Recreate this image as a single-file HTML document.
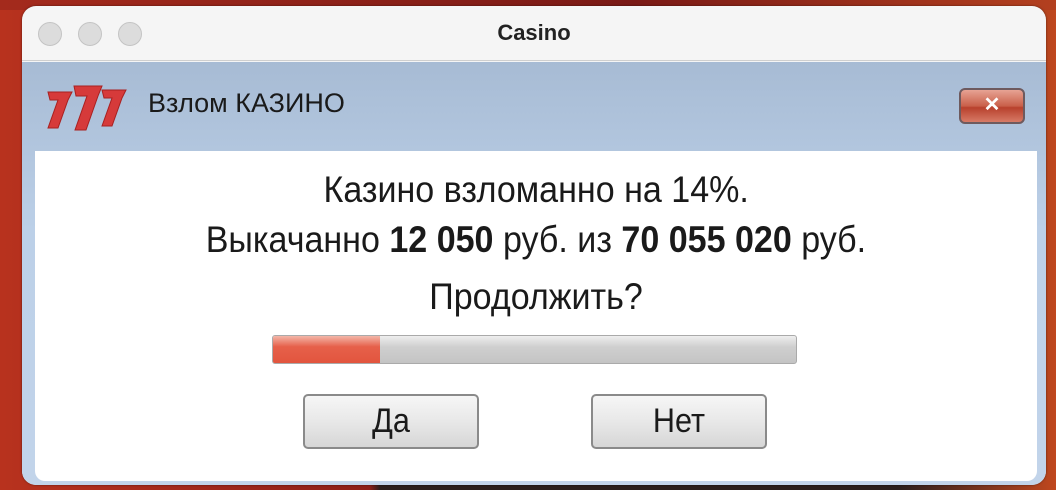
<!DOCTYPE html>
<html><head><meta charset="utf-8"><style>
*{margin:0;padding:0;box-sizing:border-box}
body{width:1056px;height:490px;overflow:hidden;position:relative;background:linear-gradient(90deg,#b8321e 0%,#8e1f18 35%,#2a1e1c 36%,#2a1e1c 85%,#c0471e 100%);font-family:"Liberation Sans",sans-serif}
.bgtop{position:absolute;left:0;top:0;width:1056px;height:10px;background:linear-gradient(90deg,#a42a1c,#7a1a16 60%,#b3401f)}
.win{position:absolute;left:22px;top:6px;width:1024px;height:479px;border-radius:14px;background:#f5f5f5;overflow:hidden;box-shadow:0 0 2px rgba(0,0,0,.5)}
.tb{height:55px;border-bottom:1px solid #cfcfcf;position:relative}
.dot{position:absolute;top:16px;width:24px;height:24px;border-radius:50%;background:#dcdcdc;border:1px solid #c4c4c4}
.title{position:absolute;top:14px;width:100%;text-align:center;font-weight:bold;font-size:22px;color:#222}
.hdr{position:absolute;top:56px;left:0;width:1024px;height:423px;background:linear-gradient(#a7bbd4,#bcd0e8 40%,#c2d4ea)}
.hdr .t{position:absolute;left:126px;top:26px;font-size:27px;color:#1a1a1a}
.x{position:absolute;left:937px;top:26px;width:66px;height:36px;border-radius:6px;border:2px solid #6e5a5e;background:linear-gradient(#e7a394,#c9604a 50%,#b8402c 55%,#d77a66);color:#fff;font-weight:bold;font-size:20px;text-align:center;line-height:31px}
.content{position:absolute;left:13px;top:89px;width:1002px;height:330px;background:#fff;border-radius:0 0 10px 10px}
.ln{position:absolute;left:0;width:1002px;text-align:center;font-size:37px;color:#1a1a1a}
.ln span.s{display:inline-block;transform:scaleX(.92)}
.bar{position:absolute;left:237px;top:184px;width:525px;height:29px;border:1px solid #aaa;border-radius:3px;background:linear-gradient(#eee,#cfcfcf 40%,#c4c4c4);overflow:hidden}
.fill{position:absolute;left:0;top:0;width:107px;height:100%;background:linear-gradient(#f3b6a8,#e6604a 40%,#e2553e)}
.btn{position:absolute;top:243px;width:176px;height:55px;border:2px solid #8a8a8a;border-radius:5px;background:linear-gradient(#f6f6f6,#e8e8e8 50%,#d6d6d6);text-align:center;font-size:34px;line-height:50px;color:#1a1a1a}
.btn span{display:inline-block;transform:scaleX(.9)}
</style></head><body>
<div class="bgtop"></div>
<div class="win">
 <div class="tb">
  <div class="dot" style="left:16px"></div><div class="dot" style="left:56px"></div><div class="dot" style="left:96px"></div>
  <div class="title">Casino</div>
 </div>
 <div class="hdr">
  <svg style="position:absolute;left:24px;top:18px" width="84" height="52" viewBox="0 0 84 52">
   <g fill="#d63a3a" stroke="#a82020" stroke-width="1">
    <path d="M2 12 L26 12 L22 20 L12 48 L2 48 L12 20 L4 20 Z"/>
    <path d="M28 6 L56 6 L52 16 L40 50 L29 50 L41 16 L30 16 Z"/>
    <path d="M56 10 L80 10 L76 18 L66 46 L56 46 L66 18 L58 18 Z"/>
   </g>
  </svg>
  <div class="t">Взлом КАЗИНО</div>
  <div class="x">✕</div>
  <div class="content">
   <div class="ln" style="top:18px"><span class="s">Казино взломанно на 14%.</span></div>
   <div class="ln" style="top:68px"><span class="s">Выкачанно <b>12 050</b> руб. из <b>70 055 020</b> руб.</span></div>
   <div class="ln" style="top:125px"><span class="s">Продолжить?</span></div>
   <div class="bar"><div class="fill"></div></div>
   <div class="btn" style="left:268px"><span>Да</span></div>
   <div class="btn" style="left:556px"><span>Нет</span></div>
  </div>
 </div>
</div>
</body></html>
